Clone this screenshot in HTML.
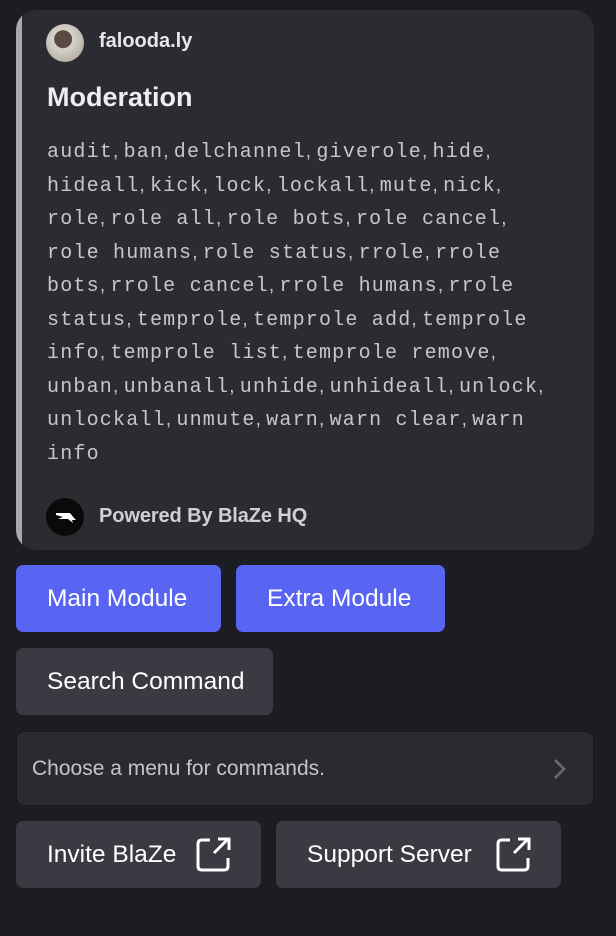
<!DOCTYPE html>
<html><head><meta charset="utf-8"><style>
*{margin:0;padding:0;box-sizing:border-box}
body{width:616px;height:936px;background:#1c1d22;font-family:"Liberation Sans",sans-serif;position:relative;overflow:hidden}
.card{position:absolute;left:16px;top:10px;width:578px;height:540px;background:#2b2c32;border-radius:20px;overflow:hidden}
.bar{position:absolute;left:0;top:0;width:6px;height:100%;background:#a7a9ad}
.av{position:absolute;left:46px;top:24px;width:38px;height:38px;border-radius:50%;background:radial-gradient(circle at 45% 40%,#5a4a40 0 28%,#d8d4cc 30%,#b9b3a8 70%,#8a857c)}
.name{position:absolute;left:99px;top:30px;color:#e6e7ea;font-size:20px;font-weight:bold}
.title{position:absolute;left:47px;top:82px;color:#eceef1;font-size:27px;font-weight:bold}
.txt{position:absolute;left:47px;top:135px;color:#c6c7cc;white-space:nowrap}
.txt div{height:33.55px;line-height:33.55px;font-size:19px}
.txt code{font-family:"Liberation Mono",monospace;font-size:20px;letter-spacing:1.2px;line-height:33.55px}
.txt span{font-size:19px;line-height:33.55px}
.logo{position:absolute;left:46px;top:498px;width:38px;height:38px;border-radius:50%;background:#0b0a08}
.pw{position:absolute;left:99px;top:505px;color:#cfd0d4;font-size:20px;font-weight:bold;letter-spacing:-0.1px}
.btn{position:absolute;height:67px;border-radius:7px;color:#fff;font-size:24.5px;display:flex;align-items:center;padding-left:31px}
.blue{background:#5865f2}
.gray{background:#3a3b42}
.sel{position:absolute;left:16px;top:731px;width:578px;height:75px;border:1.5px solid #16171b;border-radius:8px;background:#2a2b31;color:#c4c5ca;font-size:21px;padding-left:15px;display:flex;align-items:center}
svg.ic{position:absolute}
</style></head><body>
<div class="card"><div class="bar"></div></div>
<div class="av"></div>
<div class="name">falooda.ly</div>
<div class="title">Moderation</div>
<div class="txt">
<div><code>audit</code><span>, </span><code>ban</code><span>, </span><code>delchannel</code><span>, </span><code>giverole</code><span>, </span><code>hide</code><span>,</span></div>
<div><code>hideall</code><span>, </span><code>kick</code><span>, </span><code>lock</code><span>, </span><code>lockall</code><span>, </span><code>mute</code><span>, </span><code>nick</code><span>,</span></div>
<div><code>role</code><span>, </span><code>role all</code><span>, </span><code>role bots</code><span>, </span><code>role cancel</code><span>,</span></div>
<div><code>role humans</code><span>, </span><code>role status</code><span>, </span><code>rrole</code><span>, </span><code>rrole</code></div>
<div><code>bots</code><span>, </span><code>rrole cancel</code><span>, </span><code>rrole humans</code><span>, </span><code>rrole</code></div>
<div><code>status</code><span>, </span><code>temprole</code><span>, </span><code>temprole add</code><span>, </span><code>temprole</code></div>
<div><code>info</code><span>, </span><code>temprole list</code><span>, </span><code>temprole remove</code><span>,</span></div>
<div><code>unban</code><span>, </span><code>unbanall</code><span>, </span><code>unhide</code><span>, </span><code>unhideall</code><span>, </span><code>unlock</code><span>,</span></div>
<div><code>unlockall</code><span>, </span><code>unmute</code><span>, </span><code>warn</code><span>, </span><code>warn clear</code><span>, </span><code>warn</code></div>
<div><code>info</code></div>
</div>
<div class="logo"><svg width="38" height="38" viewBox="0 0 38 38"><path d="M10 15 L24 15 L28 20 L30 22 L26 22 L27 25 L22 21 L12 21 L17 19 L10 17Z" fill="#fff"/></svg></div>
<div class="pw">Powered By BlaZe HQ</div>
<div class="btn blue" style="left:16px;top:565px;width:205px">Main Module</div>
<div class="btn blue" style="left:236px;top:565px;width:209px">Extra Module</div>
<div class="btn gray" style="left:16px;top:648px;width:257px">Search Command</div>
<div class="sel">Choose a menu for commands.</div>
<svg class="ic" style="left:550px;top:757px" width="20" height="24" viewBox="0 0 20 24"><path d="M5 3 L14 12 L5 21" fill="none" stroke="#6b6d74" stroke-width="2.5"/></svg>
<div class="btn gray" style="left:16px;top:821px;width:245px">Invite BlaZe</div>
<div class="btn gray" style="left:276px;top:821px;width:285px">Support Server</div>
<svg class="ic" style="left:196px;top:836px" width="36" height="36" viewBox="0 0 36 36"><path d="M14 4 H6 Q2 4 2 8 V30 Q2 34 6 34 H28 Q32 34 32 30 V22" fill="none" stroke="#fff" stroke-width="3"/><path d="M18 17 L31 4 M22 3 H33 V14" fill="none" stroke="#fff" stroke-width="3"/></svg>
<svg class="ic" style="left:496px;top:836px" width="36" height="36" viewBox="0 0 36 36"><path d="M14 4 H6 Q2 4 2 8 V30 Q2 34 6 34 H28 Q32 34 32 30 V22" fill="none" stroke="#fff" stroke-width="3"/><path d="M18 17 L31 4 M22 3 H33 V14" fill="none" stroke="#fff" stroke-width="3"/></svg>
</body></html>
